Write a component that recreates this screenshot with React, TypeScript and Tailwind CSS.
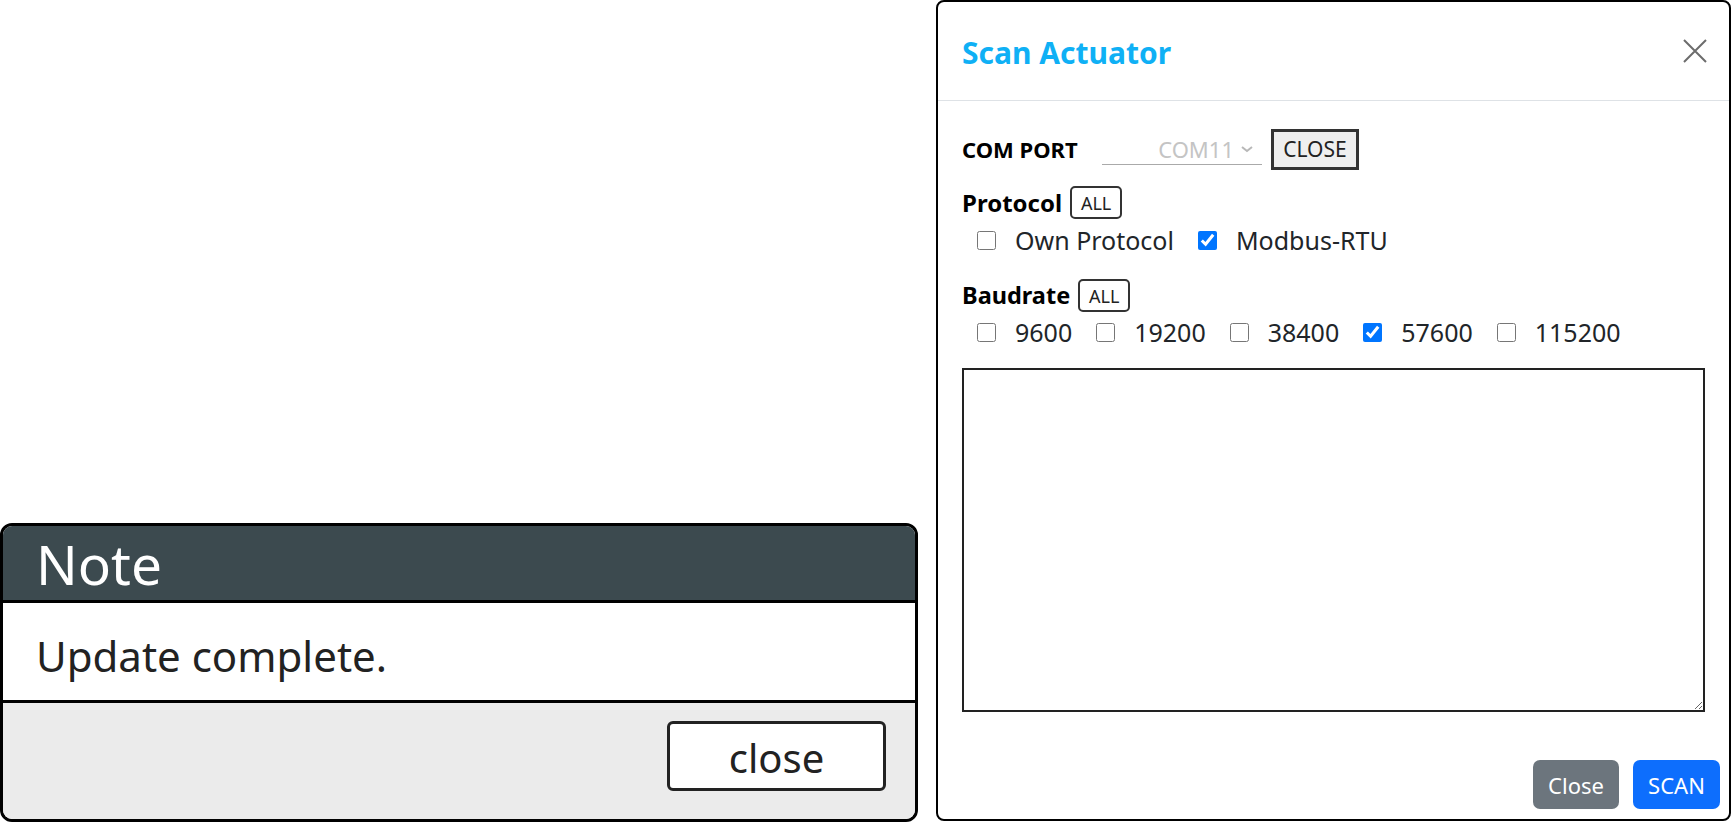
import React from "react";

const sans = { fontFamily: '"Noto Sans", "Liberation Sans", sans-serif' };

function Check({ label, checked = false }: { label: string; checked?: boolean }) {
    return (
        <label className="flex items-center mr-[24px]">
            <input type="checkbox" defaultChecked={checked} className="m-0 w-[19px] h-[19px] accent-[#0075ff]" />
            <span className="ml-[19px] text-[25px] text-[#212529] leading-none">{label}</span>
        </label>
    );
}

function AllButton() {
    return (
        <button className="ml-[8px] w-[52px] h-[33px] border-2 border-[#333] rounded-[5px] bg-white text-[18px] text-[#222] leading-none">
            ALL
        </button>
    );
}

function NoteDialog() {
    return (
        <div className="w-[918px] h-[299px] flex flex-col border-[3px] border-black rounded-[12px] overflow-hidden bg-white">
            {/* header */}
            <div className="h-[77px] shrink-0 bg-[#3c4a4f] border-b-[3px] border-black flex items-center pl-[33px]">
                <span className="text-[55px] text-white leading-none">Note</span>
            </div>
            {/* message */}
            <div className="h-[100px] shrink-0 border-b-[3px] border-black flex items-center pl-[33px] pt-[8px]">
                <span className="text-[42px] text-[#222] leading-none">Update complete.</span>
            </div>
            {/* footer */}
            <div className="flex-1 bg-[#ebebeb] flex justify-end items-start pt-[18px] pr-[29px]">
                <button className="w-[219px] h-[70px] border-[3px] border-[#222] rounded-[6px] bg-white text-[40px] text-[#222] leading-none pt-[4px]">
                    close
                </button>
            </div>
        </div>
    );
}

function ScanModal() {
    return (
        <div className="w-[795px] h-[821px] flex flex-col border-2 border-black rounded-[8px] bg-white">
            {/* header */}
            <div className="h-[99px] shrink-0 border-b border-[#dee2e6] flex items-center justify-between pl-[24px] pr-[22px] pt-[4px]">
                <h5 className="text-[30px] font-bold text-[#0fb0f5] leading-none">Scan Actuator</h5>
                <svg width="24" height="24" viewBox="0 0 24 24" className="mb-[4px]">
                    <path d="M1 1 L23 23 M23 1 L1 23" stroke="#6c6c6c" strokeWidth="2" />
                </svg>
            </div>

            {/* body */}
            <div className="px-[24px] flex flex-col">
                <div className="mt-[28px] h-[41px] flex items-center">
                    <span className="w-[140px] text-[22px] font-bold text-black">COM PORT</span>
                    <div className="w-[160px] h-[30px] border-b border-[#aaa] flex items-center justify-end pr-[8px]">
                        <span className="text-[22px] text-[#c4c4c4] leading-none">COM11</span>
                        <svg width="14" height="10" viewBox="0 0 14 10" className="ml-[6px]">
                            <path d="M2 3 L7 7 L12 3" stroke="#b8b8b8" strokeWidth="2" fill="none" />
                        </svg>
                    </div>
                    <button className="ml-[9px] w-[88px] h-[41px] border-[3px] border-[#333] bg-[#efefef] text-[21px] text-[#222] leading-none">
                        CLOSE
                    </button>
                </div>

                <div className="mt-[16px] h-[33px] flex items-center">
                    <span className="text-[24px] font-bold text-black">Protocol</span>
                    <AllButton />
                </div>
                <div className="mt-[7px] h-[28px] flex items-center pl-[15px]">
                    <Check label="Own Protocol" />
                    <Check label="Modbus-RTU" checked />
                </div>

                <div className="mt-[25px] h-[33px] flex items-center">
                    <span className="text-[23.5px] font-bold text-black">Baudrate</span>
                    <AllButton />
                </div>
                <div className="mt-[6px] h-[28px] flex items-center pl-[15px]">
                    <Check label="9600" />
                    <Check label="19200" />
                    <Check label="38400" />
                    <Check label="57600" checked />
                    <Check label="115200" />
                </div>

                <textarea className="mt-[22px] w-full h-[344px] border-2 border-[#222] resize-y outline-none" />
            </div>

            {/* footer */}
            <div className="mt-[48px] flex justify-end gap-[14px] pr-[9px]">
                <button className="w-[86px] h-[49px] rounded-[7px] bg-[#6c757d] text-white text-[22px] leading-none">Close</button>
                <button className="w-[87px] h-[49px] rounded-[7px] bg-[#0d6efd] text-white text-[22px] leading-none">SCAN</button>
            </div>
        </div>
    );
}

export default function App() {
    return (
        <div className="w-[1732px] h-[822px] bg-white flex overflow-hidden" style={sans}>
            <div className="w-[918px] flex flex-col justify-end">
                <NoteDialog />
            </div>
            <div className="ml-[18px]">
                <ScanModal />
            </div>
        </div>
    );
}
